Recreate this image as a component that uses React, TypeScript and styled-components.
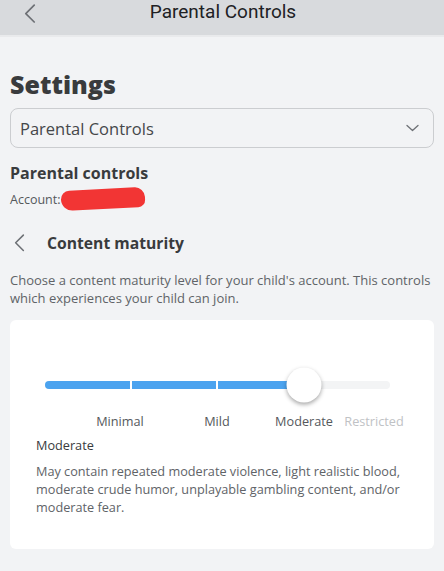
import styled, { createGlobalStyle } from "styled-components";

const GlobalStyle = createGlobalStyle`
  html, body {
    margin: 0;
    padding: 0;
    background: #f2f3f5;
  }
  body {
    font-family: "Open Sans", "Liberation Sans", sans-serif;
    color: #393b3d;
  }
`;

const levels = ["Minimal", "Mild", "Moderate", "Restricted"];
const selected = 2;

function ChevronLeft({ size = 14 }: { size?: number }) {
  return (
    <svg width={size} height={size * 1.6} viewBox="0 0 10 16" fill="none">
      <path d="M8.5 1 L1.5 8 L8.5 15" stroke="#6d7075" strokeWidth="1.4" strokeLinecap="round" strokeLinejoin="round" />
    </svg>
  );
}

function ChevronDown() {
  return (
    <svg width="13" height="8" viewBox="0 0 13 8" fill="none">
      <path d="M1 1.5 L6.5 6.5 L12 1.5" stroke="#6d7075" strokeWidth="1.3" strokeLinecap="round" strokeLinejoin="round" />
    </svg>
  );
}

export default function App() {
  return (
    <>
      <GlobalStyle />
      <TopBar>
        <TopBack>
          <ChevronLeft size={12} />
        </TopBack>
        <TopTitle>Parental Controls</TopTitle>
      </TopBar>
      <Page>
        <Heading>Settings</Heading>
        <Select>
          <span>Parental Controls</span>
          <ChevronDown />
        </Select>
        <SectionTitle>Parental controls</SectionTitle>
        <AccountRow>
          Account:
          <Scribble />
        </AccountRow>
        <BackRow>
          <ChevronLeft size={11} />
          <SubTitle>Content maturity</SubTitle>
        </BackRow>
        <Intro>
          Choose a content maturity level for your child's account. This controls which
          experiences your child can join.
        </Intro>
        <Card>
          <Slider>
            <Track>
              <Fill style={{ width: "74%" }} />
              <Tick style={{ left: "24.7%" }} />
              <Tick style={{ left: "49.6%" }} />
              <Knob style={{ left: "75%" }} />
            </Track>
          </Slider>
          <Labels>
            {levels.map((l, i) => (
              <Label key={l} $muted={i > selected}>
                {l}
              </Label>
            ))}
          </Labels>
          <LevelName>Moderate</LevelName>
          <LevelText>
            May contain repeated moderate violence, light realistic blood, moderate crude
            humor, unplayable gambling content, and/or moderate fear.
          </LevelText>
        </Card>
      </Page>
    </>
  );
}

const TopBar = styled.header`
  position: relative;
  height: 35px;
  background: #d8dadd;
  border-bottom: 2px solid #e9eaec;
  display: flex;
  align-items: center;
  justify-content: center;
`;

const TopBack = styled.div`
  position: absolute;
  left: 24px;
  top: 4px;
  display: flex;
`;

const TopTitle = styled.div`
  font-family: Roboto, "Noto Sans", sans-serif;
  font-size: 19px;
  color: #202124;
  margin-top: -12px;
  margin-left: 2px;
`;

const Page = styled.main`
  padding: 30px 10px 20px;
  display: flex;
  flex-direction: column;
`;

const Heading = styled.h1`
  margin: 0;
  font-size: 25px;
  font-weight: 800;
  line-height: 34px;
  color: #393b3d;
`;

const Select = styled.div`
  margin-top: 7px;
  height: 38px;
  border: 1px solid #cbcdd0;
  border-radius: 8px;
  padding: 0 14px 0 9px;
  display: flex;
  align-items: center;
  justify-content: space-between;
  font-size: 16.5px;
  color: #45474a;
`;

const SectionTitle = styled.h2`
  margin: 13px 0 0;
  font-size: 16px;
  font-weight: 700;
  line-height: 24px;
  color: #393b3d;
`;

const AccountRow = styled.div`
  margin-top: 3px;
  display: flex;
  align-items: center;
  font-size: 12.5px;
  color: #55585c;
  height: 22px;
`;

const Scribble = styled.span`
  display: inline-block;
  width: 84px;
  height: 20px;
  margin-left: 1px;
  background: #f23534;
  border-radius: 12px 14px 10px 16px;
  transform: rotate(-3deg);
`;

const BackRow = styled.div`
  margin-top: 22px;
  display: flex;
  align-items: center;
  gap: 22px;
  padding-left: 4px;
`;

const SubTitle = styled.h3`
  margin: 0;
  font-size: 15.7px;
  font-weight: 700;
  color: #393b3d;
`;

const Intro = styled.p`
  margin: 17px 0 0;
  font-size: 13px;
  line-height: 18px;
  color: #606367;
`;

const Card = styled.section`
  margin-top: 13px;
  background: #ffffff;
  border-radius: 6px;
  padding: 61px 26px 33px;
`;

const Slider = styled.div`
  padding: 0 18px 0 9px;
`;

const Track = styled.div`
  position: relative;
  height: 8px;
  border-radius: 4px;
  background: #f3f4f5;
`;

const Fill = styled.div`
  height: 100%;
  border-radius: 4px 0 0 4px;
  background: #4ba3ef;
`;

const Tick = styled.span`
  position: absolute;
  top: 0;
  width: 2px;
  height: 8px;
  background: #ffffff;
`;

const Knob = styled.span`
  position: absolute;
  top: 50%;
  width: 35px;
  height: 35px;
  border-radius: 50%;
  background: #ffffff;
  transform: translate(-50%, -50%);
  box-shadow: 0 2px 4px rgba(0, 0, 0, 0.35);
`;

const Labels = styled.div`
  margin-top: 23px;
  display: grid;
  grid-template-columns: 96px 98px 76px 64px;
  padding-left: 36px;
  font-size: 12.7px;
  line-height: 18px;
`;

const Label = styled.span<{ $muted: boolean }>`
  text-align: center;
  white-space: nowrap;
  color: ${(p) => (p.$muted ? "#c0c2c5" : "#55585c")};
`;

const LevelName = styled.div`
  margin-top: 6px;
  font-size: 12.7px;
  color: #393b3d;
`;

const LevelText = styled.p`
  margin: 8px 0 0;
  font-size: 12.7px;
  line-height: 18px;
  color: #606367;
`;
